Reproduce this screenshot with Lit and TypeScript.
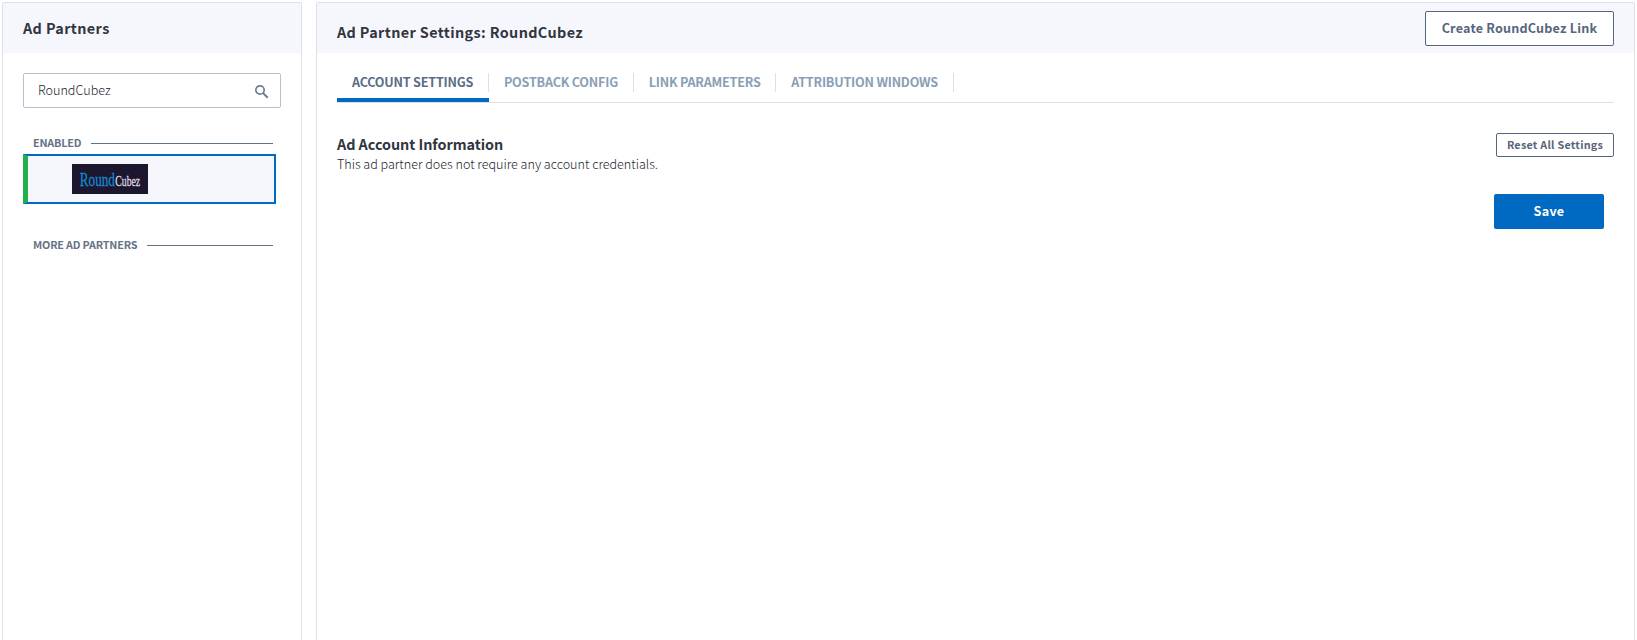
import { LitElement, html, css } from "lit";
import { customElement, state } from "lit/decorators.js";

@customElement("partner-list")
class PartnerList extends LitElement {
  static styles = css`
    :host { display: block; box-sizing: border-box; width: 300px; border: 1px solid #dae1e9; border-bottom: 0; border-radius: 2px 2px 0 0; }
    .head { height: 50px; box-sizing: border-box; padding: 13px 20px 0; background: #f6f7fc; font-size: 14.4px; line-height: 24px; font-weight: 700; letter-spacing: 0.38px; color: #31353f; }
    .search { display: flex; align-items: flex-start; justify-content: space-between; box-sizing: border-box; width: 258px; height: 35px; margin: 20px 0 0 20px; padding: 0 11px 0 14px; border: 1px solid #b6c2cf; border-radius: 2px; color: #23262d; font-size: 12.6px; font-weight: 300; line-height: 31px; }
    .icon { width: 15px; height: 15px; margin-top: 10px; }
    .group { display: flex; align-items: flex-start; gap: 10px; width: 240px; height: 20px; margin-left: 30px; color: #657485; font-size: 10.8px; line-height: 18px; font-weight: 700; letter-spacing: -0.18px; white-space: nowrap; }
    .group::after { content: ""; flex: 1; height: 1px; background: #657485; margin-top: 10px; }
    .enabled { margin-top: 25px; }
    .more { margin-top: 31px; }
    .card { display: flex; align-items: center; box-sizing: border-box; width: 253px; height: 50px; margin: 1px 0 0 20px; padding-left: 44px; border: 2px solid #006ac3; border-left: 5px solid #21b04b; background: #f6f7fc; }
    .logo { display: block; width: 76px; height: 30px; }
    .word { font-family: "Liberation Serif", serif; }
  `;
  render() {
    return html`
      <div class="head">Ad Partners</div>
      <div class="search">
        <span>RoundCubez</span>
        <svg class="icon" viewBox="0 0 15 15" fill="none" stroke="#6f7f91">
          <circle cx="6" cy="6" r="4.2" stroke-width="1.7" />
          <path d="M9 9 L13.7 13.7" stroke-width="2" />
        </svg>
      </div>
      <div class="group enabled"><span>ENABLED</span></div>
      <div class="card">
        <svg class="logo" viewBox="0 0 76 30">
          <rect width="76" height="30" fill="#1c172f" />
          <text class="word" transform="translate(7.8 21.5) scale(0.73 1)" font-size="18" fill="#1787d0" stroke="#1787d0" stroke-width="0.3">Round</text>
          <text class="word" transform="translate(43.3 21.5) scale(0.65 1)" font-size="15" fill="#dddbe2" stroke="#dddbe2" stroke-width="0.3">Cubez</text>
        </svg>
      </div>
      <div class="group more"><span>MORE AD PARTNERS</span></div>
    `;
  }
}

@customElement("partner-settings")
class PartnerSettings extends LitElement {
  @state() active = 0;
  tabs = ["ACCOUNT SETTINGS", "POSTBACK CONFIG", "LINK PARAMETERS", "ATTRIBUTION WINDOWS"];
  static styles = css`
    :host { display: block; box-sizing: border-box; flex: 1; border: 1px solid #dae1e9; border-bottom: 0; border-radius: 2px 2px 0 0; color: #31353f; }
    .head { display: flex; justify-content: space-between; align-items: flex-start; box-sizing: border-box; height: 50px; padding: 8px 20px 0; background: #f6f7fc; }
    .title { margin-top: 9px; font-size: 14.4px; line-height: 24px; font-weight: 700; letter-spacing: 0.37px; }
    button { display: block; box-sizing: border-box; padding: 0; margin: 0; font-family: inherit; font-weight: 700; border: 1px solid #56667d; border-radius: 2px; background: #fff; color: #56667d; white-space: nowrap; }
    .create { width: 189px; height: 35px; font-size: 12.6px; line-height: 31px; padding-bottom: 2px; letter-spacing: 0.2px; }
    .reset { width: 118px; height: 24px; font-size: 10.8px; line-height: 20px; padding-bottom: 2px; letter-spacing: 0.24px; }
    .save { width: 110px; height: 35px; margin: 37px 10px 0 auto; border: 0; background: #006ac3; color: #fff; font-size: 12.6px; line-height: 33px; padding-bottom: 2px; letter-spacing: 0.3px; }
    .body { padding: 10px 20px 0; }
    .tabs { display: flex; height: 39px; border-bottom: 1px solid #dae1e9; }
    .tab { position: relative; box-sizing: border-box; height: 39px; padding: 9px 15.7px 0 15px; font-size: 12.6px; line-height: 19px; font-weight: 700; letter-spacing: -0.21px; color: #8a9eb5; white-space: nowrap; }
    .tab::after { content: ""; position: absolute; right: 0; top: 10px; width: 1px; height: 19px; background: #dae1e9; }
    .on { color: #5a6d86; border-bottom: 4px solid #006ac3; }
    .row { display: flex; justify-content: space-between; align-items: flex-start; margin-top: 30px; }
    .name { margin-top: -1px; font-size: 14.4px; line-height: 24px; font-weight: 700; letter-spacing: -0.05px; }
    .note { margin-top: -2px; font-size: 12.6px; line-height: 20px; font-weight: 300; height: 3px; letter-spacing: -0.02px; color: #23262d; }
  `;
  render() {
    return html`
      <div class="head">
        <div class="title">Ad Partner Settings: RoundCubez</div>
        <button class="create">Create RoundCubez Link</button>
      </div>
      <div class="body">
        <div class="tabs">
          ${this.tabs.map((t, i) => html`<div class="tab ${i === this.active ? "on" : ""}" @click=${() => (this.active = i)}>${t}</div>`)}
        </div>
        <div class="row">
          <div>
            <div class="name">Ad Account Information</div>
            <div class="note">This ad partner does not require any account credentials.</div>
          </div>
          <button class="reset">Reset All Settings</button>
        </div>
        <button class="save">Save</button>
      </div>
    `;
  }
}

@customElement("app-root")
class AppRoot extends LitElement {
  static styles = css`
    :host { display: flex; gap: 14px; box-sizing: border-box; width: 100%; height: 640px; overflow: hidden; padding: 2px 2px 0 2px; background: #fff; font-family: "Noto Sans CJK SC", "Noto Sans", sans-serif; }
  `;
  render() {
    return html`<partner-list></partner-list><partner-settings></partner-settings>`;
  }
}
